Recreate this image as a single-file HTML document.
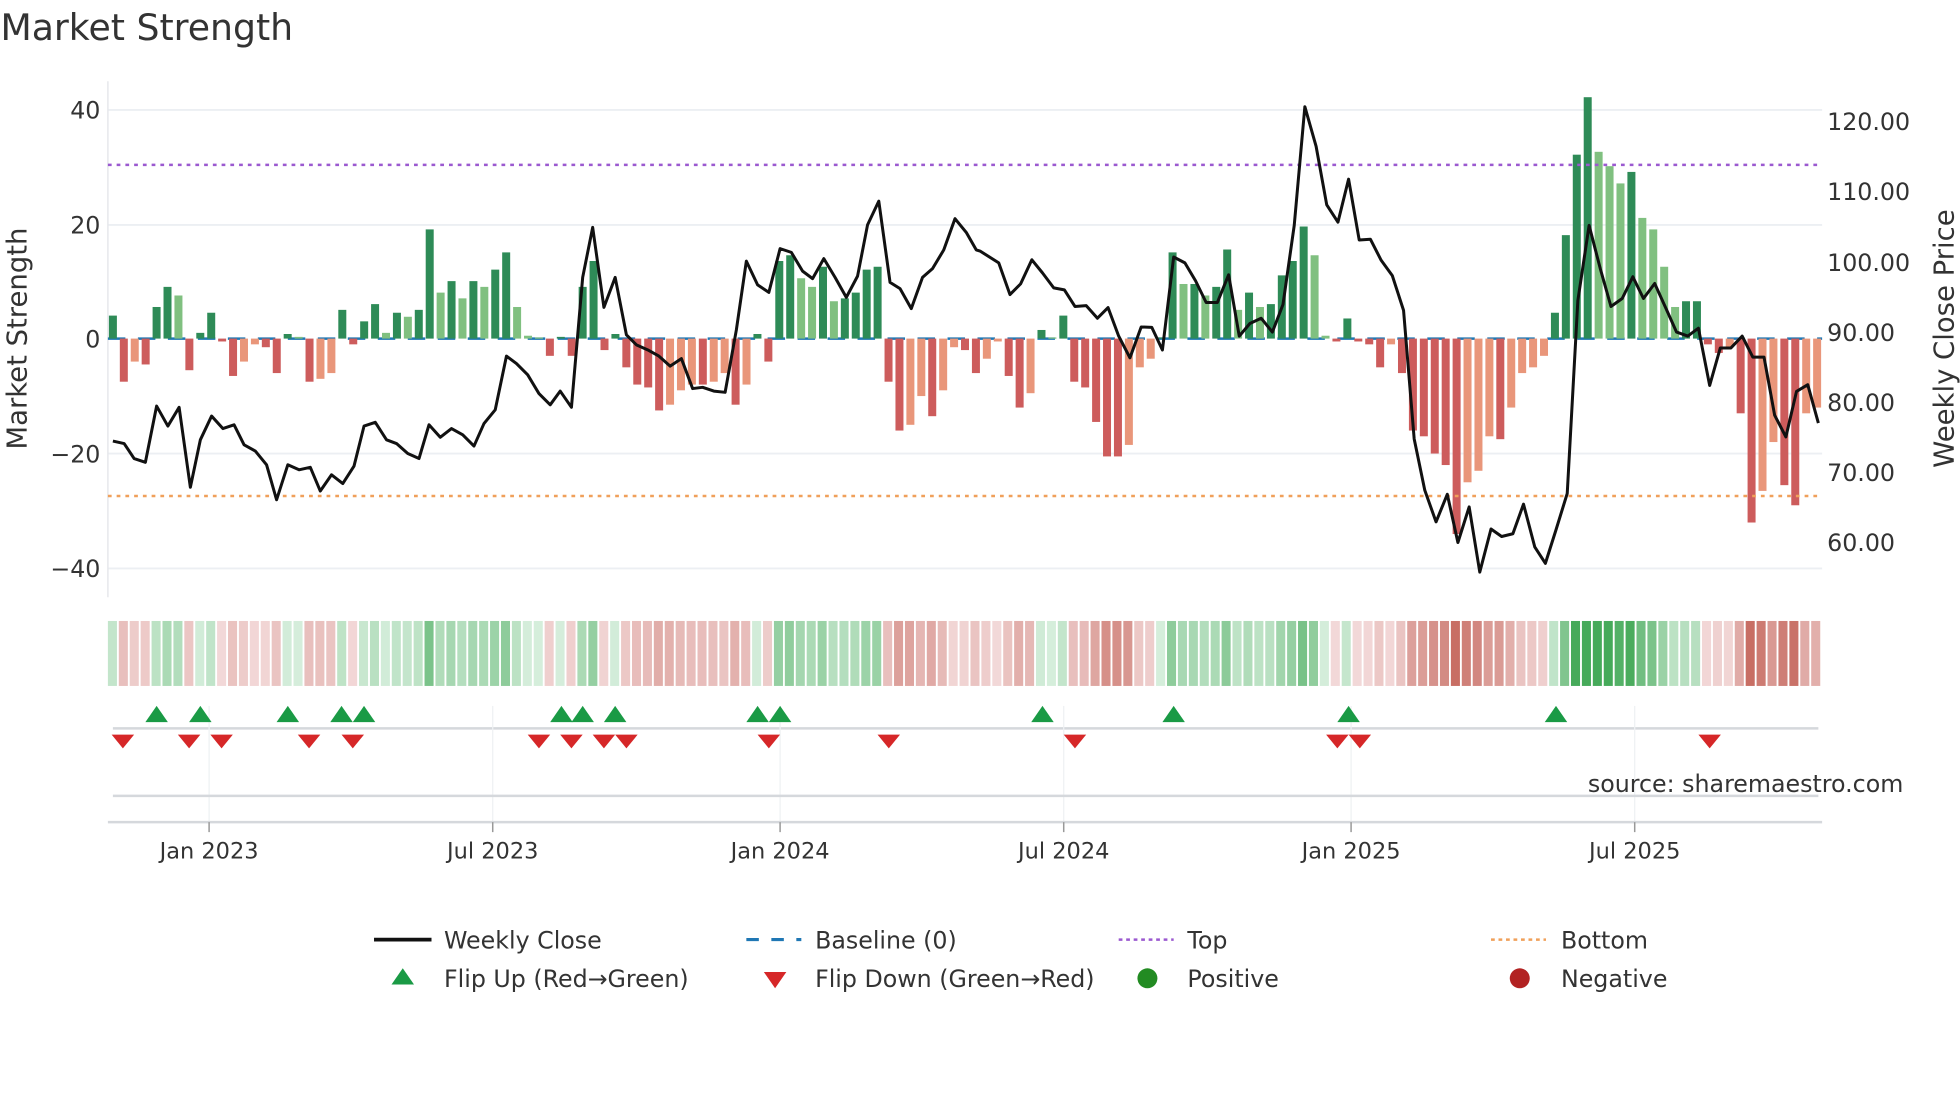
<!DOCTYPE html>
<html><head><meta charset="utf-8">
<style>
html,body{margin:0;padding:0;background:#fff;width:1960px;height:1102px;overflow:hidden}
svg{display:block}
text{font-family:"DejaVu Sans","Liberation Sans",sans-serif;fill:#333}
</style></head><body>
<svg id="s" width="1960" height="1102" viewBox="0 0 1568 882" xmlns="http://www.w3.org/2000/svg">
<text x="0" y="32" font-size="29" fill="#333">Market Strength</text>
<g stroke="#eceff3" stroke-width="1.5">
<line x1="86" x2="1458" y1="88" y2="88"/><line x1="86" x2="1458" y1="180" y2="180"/>
<line x1="86" x2="1458" y1="363" y2="363"/><line x1="86" x2="1458" y1="455" y2="455"/>
</g>
<line x1="86" x2="86" y1="65" y2="478" stroke="#e6e8ec" stroke-width="1.2"/>
<g font-size="19" fill="#333" text-anchor="end">
<text x="80" y="95">40</text><text x="80" y="187">20</text><text x="80" y="278">0</text>
<text x="80" y="370">−20</text><text x="80" y="462">−40</text>
</g>
<g font-size="19" fill="#333">
<text x="1462" y="104">120.00</text><text x="1462" y="160">110.00</text><text x="1462" y="217">100.00</text>
<text x="1462" y="273">90.00</text><text x="1462" y="329">80.00</text><text x="1462" y="385">70.00</text>
<text x="1462" y="441">60.00</text>
</g>
<text transform="translate(21,271) rotate(-90)" font-size="22" text-anchor="middle">Market Strength</text>
<text transform="translate(1563,271) rotate(-90)" font-size="22" text-anchor="middle">Weekly Close Price</text>
<line x1="86" x2="1458" y1="271" y2="271" stroke="#1f77b4" stroke-width="2" stroke-dasharray="14,10"/>
<g id="bars"></g>
<line x1="86" x2="1458" y1="132" y2="132" stroke="#9b59d0" stroke-width="2" stroke-dasharray="3,4"/>
<line x1="86" x2="1458" y1="397" y2="397" stroke="#f0a05a" stroke-width="2" stroke-dasharray="3,4"/>
<polyline id="price" fill="none" stroke="#111" stroke-width="2.4" stroke-linejoin="round"/>
<g id="heat"></g>
<line x1="90" x2="1455" y1="583" y2="583" stroke="#d5d8dc" stroke-width="2"/>
<g stroke="#eef1f3" stroke-width="1">
<line x1="167" x2="167" y1="565" y2="658"/><line x1="394" x2="394" y1="565" y2="658"/>
<line x1="624" x2="624" y1="565" y2="658"/><line x1="851" x2="851" y1="565" y2="658"/>
<line x1="1081" x2="1081" y1="565" y2="658"/><line x1="1308" x2="1308" y1="565" y2="658"/>
</g>
<g id="marks"></g>
<line x1="90" x2="1455" y1="637" y2="637" stroke="#d5d8dc" stroke-width="2"/>
<line x1="86" x2="1458" y1="658" y2="658" stroke="#d5d8dc" stroke-width="2"/>
<g stroke="#999" stroke-width="1.2">
<line x1="167" x2="167" y1="658" y2="666"/><line x1="394" x2="394" y1="658" y2="666"/>
<line x1="624" x2="624" y1="658" y2="666"/><line x1="851" x2="851" y1="658" y2="666"/>
<line x1="1081" x2="1081" y1="658" y2="666"/><line x1="1308" x2="1308" y1="658" y2="666"/>
</g>
<g font-size="18" text-anchor="middle" fill="#333">
<text x="167" y="687">Jan 2023</text><text x="394" y="687">Jul 2023</text><text x="624" y="687">Jan 2024</text>
<text x="851" y="687">Jul 2024</text><text x="1081" y="687">Jan 2025</text><text x="1308" y="687">Jul 2025</text>
</g>
<text x="1523" y="634" font-size="19" text-anchor="end" fill="#999">source: sharemaestro.com</text>
<g font-size="19" fill="#333">
<line x1="299" x2="345" y1="752" y2="752" stroke="#111" stroke-width="3"/>
<text x="355" y="759">Weekly Close</text>
<line x1="597" x2="641" y1="752" y2="752" stroke="#1f77b4" stroke-width="2.5" stroke-dasharray="10,10"/>
<text x="652" y="759">Baseline (0)</text>
<line x1="895" x2="939" y1="752" y2="752" stroke="#9b59d0" stroke-width="2" stroke-dasharray="3,3"/>
<text x="950" y="759">Top</text>
<line x1="1193" x2="1237" y1="752" y2="752" stroke="#f0a05a" stroke-width="2" stroke-dasharray="3,3"/>
<text x="1249" y="759">Bottom</text>
<polygon points="322,775 313,788 331,788" fill="#1a9a45"/>
<text x="355" y="790">Flip Up (Red→Green)</text>
<polygon points="611,778 629,778 620,791" fill="#d62728"/>
<text x="652" y="790">Flip Down (Green→Red)</text>
<circle cx="918" cy="783" r="8" fill="#228b22"/>
<text x="950" y="790">Positive</text>
<circle cx="1216" cy="783" r="8" fill="#b22222"/>
<text x="1249" y="790">Negative</text>
</g>
</svg>
<script>
var v=[4,-7.5,-4,-4.5,5.5,9,7.5,-5.5,1,4.5,-0.5,-6.5,-4,-1,-1.5,-6,0.8,0.3,-7.5,-7,-6,5,-1,3,6,1,4.5,3.8,5,19,8,10,7,10,9,12,15,5.5,0.5,0.2,-3,0.3,-3,9,13.5,-2,0.8,-5,-8,-8.5,-12.5,-11.5,-9,-8,-8,-7.5,-6,-11.5,-8,0.8,-4,13.5,14.5,10.5,9,12.5,6.5,7,8,12,12.5,-7.5,-16,-15,-10,-13.5,-9,-1.5,-2,-6,-3.5,-0.5,-6.5,-12,-9.5,1.5,0.2,4,-7.5,-8.5,-14.5,-20.5,-20.5,-18.5,-5,-3.5,0.2,15,9.5,9.5,7.5,9,15.5,5,8,5.5,6,11,13.5,19.5,14.5,0.5,-0.5,3.5,-0.5,-1,-5,-1,-6,-16,-17,-20,-22,-34,-25,-23,-17,-17.5,-12,-6,-5,-3,4.5,18,32,42,32.5,30,27,29,21,19,12.5,5.5,6.5,6.5,-1,-2.5,-1.5,-13,-32,-26.5,-18,-25.5,-29,-13,-12];
var n=v.length,x0=90,dx=(1454-90)/(n-1),B='',H='';
function mix(a,b,t){return 'rgb('+a.map(function(c,i){return Math.round(c+(b[i]-c)*t)}).join(',')+')'}
for(var i=0;i<n;i++){var x=x0+i*dx,val=v[i],p=i?v[i-1]:0,c;
 if(val>=0)c=(val>=p)?'#2e8b57':'#80c080';else c=(val<=p)?'#cd5c5c':'#e9967a';
 var h=Math.abs(val)*4.6,y=val>=0?271-h:271;
 B+='<rect x="'+(x-3.2)+'" y="'+y+'" width="6.4" height="'+Math.max(h,1)+'" fill="'+c+'"/>';
 var t=Math.min(Math.abs(val)/30,1),hc;
 hc=val>=0?mix([214,238,220],[70,170,90],t):mix([243,218,218],[200,110,100],t);
 H+='<rect x="'+(86+i*(1372/n))+'" y="497" width="'+(1372/n-1.5)+'" height="52" fill="'+hc+'"/>';}
document.getElementById('bars').innerHTML=B;document.getElementById('heat').innerHTML=H;
var P=[[90,353],[99,355],[107,367],[116,370],[125,325],[134,341],[143,326],[152,390],[160,352],[169,333],[178,343],[187,340],[195,356],[204,361],[213,372],[221,400],[230,372],[239,376],[248,374],[256,393],[265,380],[274,387],[283,373],[291,341],[300,338],[309,352],[317,355],[326,363],[335,367],[343,340],[352,350],[361,343],[370,348],[379,357],[387,339],[396,328],[405,285],[413,291],[422,300],[431,315],[440,324],[448,313],[457,326],[466,222],[474,182],[483,246],[492,222],[501,268],[509,276],[518,280],[527,285],[536,293],[545,287],[554,311],[562,310],[571,313],[580,314],[589,264],[597,209],[606,228],[615,234],[624,199],[633,202],[642,217],[650,223],[659,207],[668,222],[677,238],[686,221],[694,180],[703,161],[712,226],[720,231],[729,247],[738,222],[746,215],[755,200],[764,175],[773,186],[781,200]];
var Z=[[0,635],[30,665],[48,745],[65,718],[83,657],[100,690],[118,728],[135,733],[152,775],[170,773],[188,805],[205,778],[222,850],[240,905],[258,827],[275,828],[292,885],[310,650],[328,665],[345,710],[362,765],[380,765],[398,695],[415,850],[432,818],[450,805],[468,840],[485,770],[503,570],[520,270],[538,370],[555,518],[573,562],[590,453],[607,607],[625,605],[642,658],[660,697],[678,785],[695,1110],[712,1240],[730,1320],[748,1250],[765,1372],[783,1282],[800,1447],[818,1338],[835,1357],[853,1350],[870,1275],[888,1383],[905,1425],[922,1340],[940,1248],[957,760],[975,570],[993,680],[1010,775],[1028,755],[1045,700],[1062,755],[1080,717],[1098,780],[1115,840],[1133,850],[1150,830],[1168,975],[1185,880],[1202,880],[1220,850],[1237,903],[1255,903],[1272,1050],[1290,1105],[1307,990],[1325,973],[1342,1070]];
Z.forEach(function(q){P.push([784+q[0]/2,q[1]/3.16])});
document.getElementById('price').setAttribute('points',P.map(function(q){return q[0].toFixed(1)+','+q[1].toFixed(1)}).join(' '));
var up=[125,160,230,273,291,449,466,492,606,624,834,939,1079,1245],dn=[98,151,177,247,282,431,457,483,501,615,711,860,1070,1088,1368],M='';
up.forEach(function(x){M+='<polygon points="'+x+',565 '+(x-9)+',578 '+(x+9)+',578" fill="#1a9a45"/>'});
dn.forEach(function(x){M+='<polygon points="'+(x-9)+',588 '+(x+9)+',588 '+x+',599" fill="#d62728"/>'});
document.getElementById('marks').innerHTML=M;
</script>
</body></html>
